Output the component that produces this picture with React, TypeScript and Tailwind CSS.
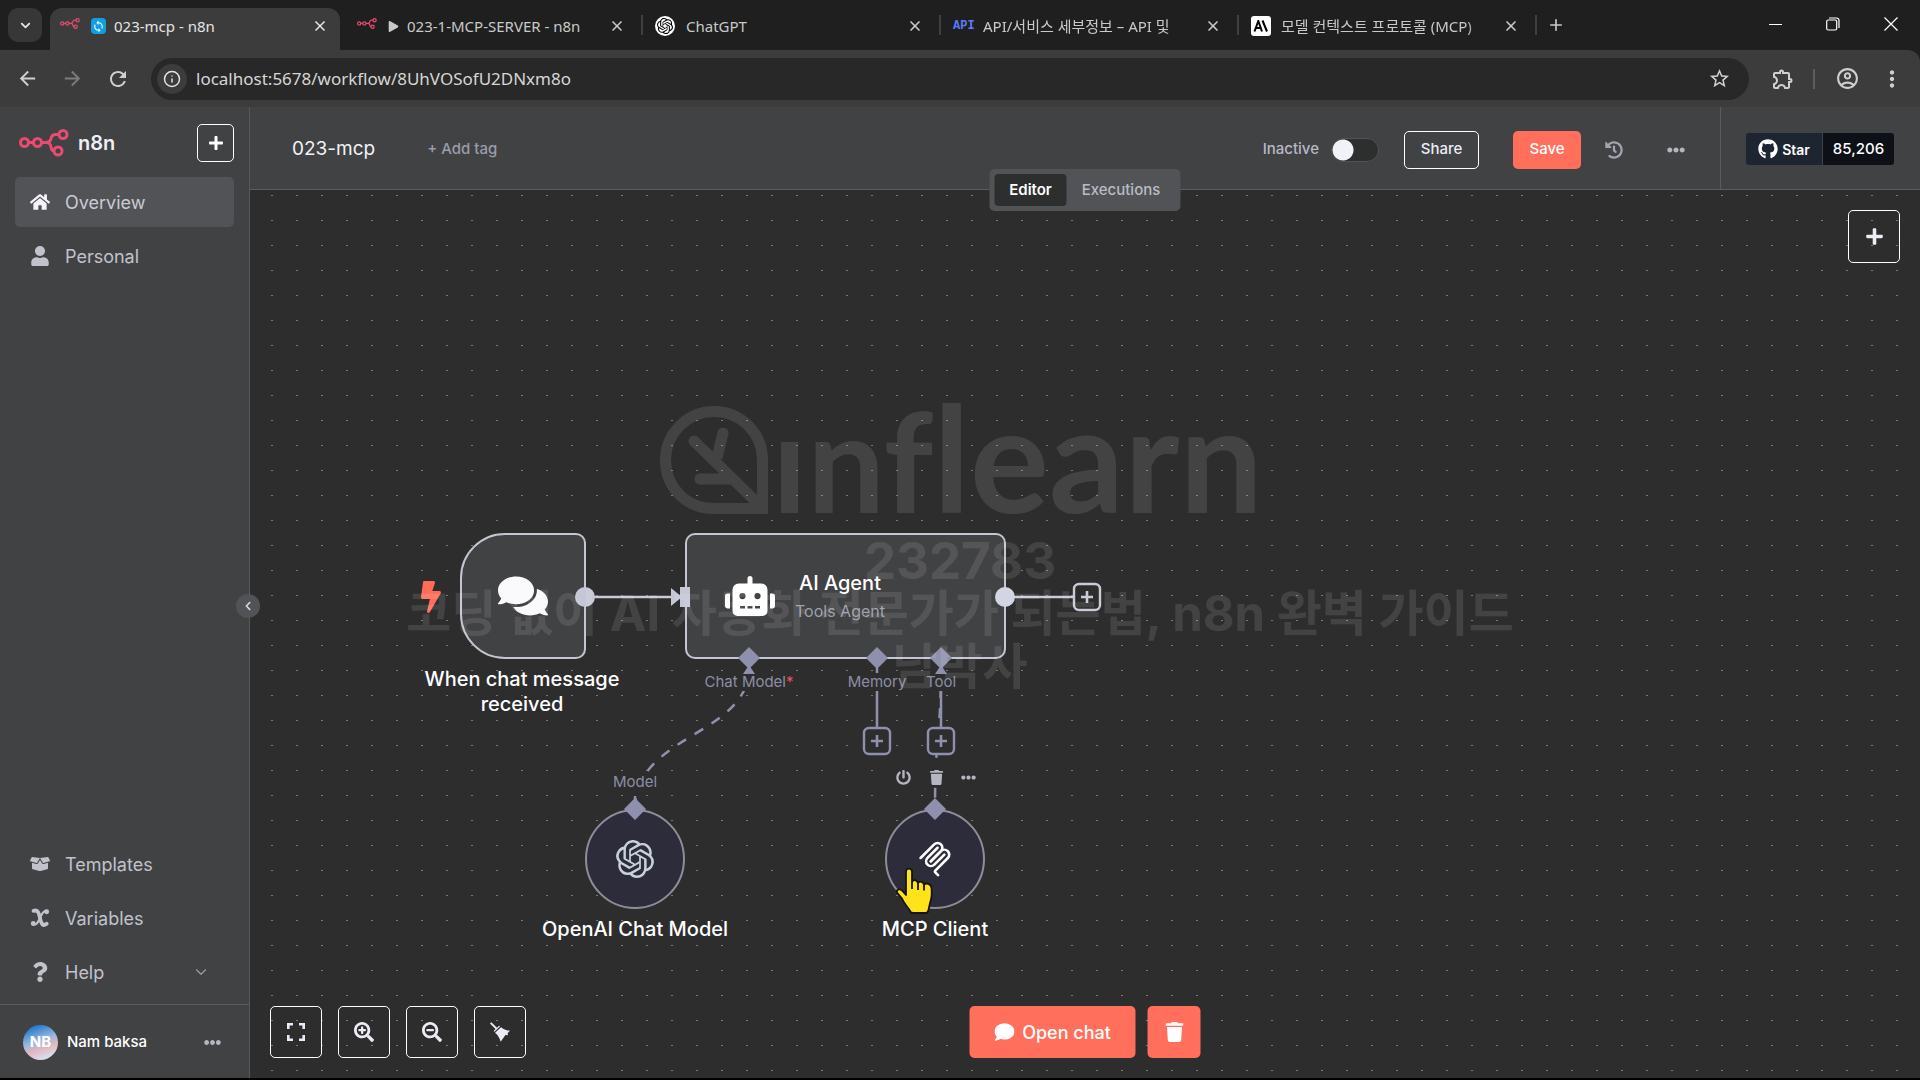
import React from "react";
import {
  FaBolt,
  FaBoxOpen,
  FaChevronLeft,
  FaComment,
  FaComments,
  FaEllipsisH,
  FaGithub,
  FaHistory,
  FaHome,
  FaPlay,
  FaPlus,
  FaPowerOff,
  FaQuestion,
  FaRobot,
  FaSearchMinus,
  FaSearchPlus,
  FaTrash,
  FaUser,
} from "react-icons/fa";
import {
  MdArrowBack,
  MdArrowForward,
  MdMoreVert,
  MdOutlineAccountCircle,
  MdOutlineExtension,
  MdRefresh,
  MdStarBorder,
  MdSync,
} from "react-icons/md";
import { SiOpenai } from "react-icons/si";
import { ChevronDown, Info, Plus, X } from "lucide-react";

function N8nMark({ className }: { className: string }) {
  return (
    <svg viewBox="0 0 50 28" className={className} fill="none" stroke="#ea4b71" strokeWidth="3" aria-hidden="true">
      <circle cx="5.5" cy="13.5" r="4" />
      <circle cx="18.5" cy="13.5" r="4" />
      <circle cx="44" cy="5.5" r="4" />
      <circle cx="39" cy="22" r="4" />
      <path d="M9.5 13.5h5M22.5 13.5h5c3 0 4-1.700 4.500-4s1.500-4 4.500-4h3.500M27.500 13.500c3 0 4 1.700 4.500 4.500s1.200 4 3 4" />
    </svg>
  );
}

function VariableIcon() {
  return (
    <svg viewBox="0 0 18 18" className="size-5" fill="none" stroke="currentColor" strokeLinecap="round" aria-hidden="true">
      <path d="M3.200 2.600C7 1.200 8 4 9 9s2.400 8 6 5.200" strokeWidth="3.400" />
      <path d="M15.200 2.800C12.500 1.800 10.500 5.500 9 9s-3.500 7.200-6.500 5.600" strokeWidth="2" />
      <circle cx="15" cy="3.400" r="1.200" strokeWidth="2" />
      <circle cx="2.900" cy="14" r="1.200" strokeWidth="2" />
    </svg>
  );
}

function FitIcon() {
  return (
    <svg viewBox="0 0 18 18" className="size-[18px]" fill="none" stroke="currentColor" strokeWidth="2.600" aria-hidden="true">
      <path d="M1.300 6V1.300H6M12 1.300h4.700V6M16.700 12v4.700H12M6 16.700H1.300V12" />
    </svg>
  );
}

function TidyIcon() {
  return (
    <svg viewBox="0 0 20 20" className="size-5" fill="currentColor" aria-hidden="true">
      <path d="M1.300.2 7 5.700l1.400-1.400a1.200 1.200 0 0 1 1.700 0L4.300 10a1.200 1.200 0 0 1 0-1.700l1.200-1.200L0 1.600z" />
      <path d="M11 5.200c3 2.500 5.500 3.300 9 3.300l-2.400 2.800.4 2-2.600-.2-4.700 6.700C9.500 16 8 13 5 10.800z" />
    </svg>
  );
}

function McpIcon({ className }: { className: string }) {
  return (
    <svg viewBox="0 0 180 180" className={className} fill="none" stroke="white" strokeWidth="13" strokeLinecap="round" aria-hidden="true">
      <path d="M18 84.853 85.882 16.971c9.373-9.373 24.569-9.373 33.941 0 9.373 9.372 9.373 24.568 0 33.941L68.558 102.177" />
      <path d="M69.265 101.470 119.823 50.912c9.373-9.373 24.569-9.373 33.942 0l.353.353c9.373 9.373 9.373 24.569 0 33.941L92.725 146.600c-3.124 3.124-3.124 8.189 0 11.313l12.606 12.607" />
      <path d="M102.853 33.941 52.648 84.146c-9.372 9.372-9.372 24.568 0 33.941 9.373 9.372 24.569 9.372 33.941 0l50.205-50.205" />
    </svg>
  );
}

function HandCursor() {
  return (
    <svg viewBox="0 0 40 50" className="absolute left-[645px] top-[677px] h-[50px] w-10" stroke="#16140a" strokeWidth="1.800" strokeLinejoin="round" aria-hidden="true">
      <path
        fill="#ffe31a"
        d="M11 5c0-4.500 6-4.500 6 0v10c1.500-3 5.500-2 6 1 1.500-2.300 5.500-1.500 6 1.500 2-2 7-.8 7.500 3.500.6 6 .5 10-1.500 15l-1.500 7c-.3 2-1 3-3 3H18c-2 0-3-1-3.500-3C12 39 8.500 36 7 31.500L2 25.500c-1-2.500 2-4 4.500-2.500L11 28z"
      />
      <path fill="none" d="M17 15v7M23 16v7M29 17.500v6" />
    </svg>
  );
}

type Tab = { title: string; icon: React.ReactNode; prefix?: React.ReactNode; active?: boolean; fade?: boolean };

const tabs: Tab[] = [
  {
    title: "023-mcp - n8n",
    active: true,
    icon: <N8nMark className="mb-1 w-5 shrink-0" />,
    prefix: (
      <span className="flex h-4 w-[15px] shrink-0 items-center justify-center rounded-sm bg-[#0f9fe2] text-white">
        <MdSync size={13} />
      </span>
    ),
  },
  { title: "023-1-MCP-SERVER - n8n", icon: <N8nMark className="mb-1 w-5 shrink-0" />, prefix: <FaPlay size={11} className="shrink-0" /> },
  {
    title: "ChatGPT",
    icon: (
      <span className="flex size-5 shrink-0 items-center justify-center rounded-full bg-white text-black">
        <SiOpenai size={16} />
      </span>
    ),
  },
  {
    title: "API/서비스 세부정보 – API 및",
    fade: true,
    icon: <span className="w-5 shrink-0 text-center font-['Liberation_Mono'] text-[12px] leading-none font-bold text-[#5b7cfa]">API</span>,
  },
  {
    title: "모델 컨텍스트 프로토콜 (MCP)",
    fade: true,
    icon: (
      <span className="flex size-5 shrink-0 items-center justify-center rounded-[3px] bg-white text-black">
        <svg viewBox="0 0 16 12" className="w-4" fill="none" stroke="currentColor" strokeWidth="2" aria-hidden="true">
          <path d="M1.500 11.500 5.300 1 9 11.500M3 8h5M9.500.5l4.500 11" />
        </svg>
      </span>
    ),
  },
];

function TabStrip() {
  return (
    <div className="flex h-[50px] items-start bg-[#1f1f1f] pt-2 text-[#c9c9c9]">
      <button aria-label="Search tabs" className="mx-2 flex size-[34px] shrink-0 items-center justify-center rounded-[10px] bg-[#373737] text-[#e3e3e3]">
        <ChevronDown size={15} strokeWidth={3} />
      </button>
      {tabs.map((tab, i) => (
        <React.Fragment key={tab.title}>
          <div
            className={
              tab.active
                ? "flex h-[42px] w-[290px] min-w-0 items-center rounded-t-[12px] bg-[#3c3c3c] pr-3 pb-1.5 pl-2.5 text-[#e4e4e4]"
                : "flex h-[42px] w-[290px] min-w-0 items-center pr-[13px] pb-1.5 pl-[9px]"
            }
          >
            {tab.icon}
            <span
              className={
                tab.fade
                  ? "ml-[10px] flex-1 text-[15px] whitespace-nowrap [mask-image:linear-gradient(to_right,black_88%,transparent)]"
                  : "ml-[11px] flex flex-1 items-center gap-2 text-[15px] whitespace-nowrap"
              }
            >
              {tab.prefix}
              {tab.title}
            </span>
            <button aria-label={`Close ${tab.title}`} className="ml-3 shrink-0">
              <X size={16} strokeWidth={2.500} />
            </button>
          </div>
          <span className={i === 0 ? "w-2 shrink-0" : "mx-[3px] mt-[7px] h-5 w-0.5 shrink-0 bg-[#3f3f3f]"} />
        </React.Fragment>
      ))}
      <button aria-label="New tab" className="mt-2 ml-[7px]">
        <Plus size={18} strokeWidth={2.200} />
      </button>
      <div className="mt-2 mr-[22px] ml-auto flex items-center gap-11 text-white">
        <button aria-label="Minimize" className="flex h-4 items-center">
          <span className="h-px w-[13px] bg-white" />
        </button>
        <button aria-label="Restore">
          <svg viewBox="0 0 14 14" className="size-3.5" fill="none" stroke="currentColor" strokeWidth="1.200" aria-hidden="true">
            <rect x="0.700" y="3" width="10" height="10" rx="1.500" />
            <path d="M3 1h7.500a2.500 2.500 0 0 1 2.500 2.500V11" />
          </svg>
        </button>
        <button aria-label="Close window">
          <svg viewBox="0 0 14 14" className="size-3.5" stroke="currentColor" strokeWidth="1.200" aria-hidden="true">
            <path d="m.5.5 13 13M13.500.5l-13 13" />
          </svg>
        </button>
      </div>
    </div>
  );
}

function AddressBar() {
  return (
    <div className="flex h-[57px] items-center rounded-tr-xl bg-[#3c3c3c] pr-[15px] pl-4 text-[#cfcfcf]">
      <button aria-label="Back" className="mr-[22px]"><MdArrowBack size={23} /></button>
      <button aria-label="Forward" className="mr-[22px] text-[#7c7c7c]"><MdArrowForward size={23} /></button>
      <button aria-label="Reload" className="mr-[21px]"><MdRefresh size={24} /></button>
      <div className="flex h-[42px] flex-1 items-center rounded-full bg-[#282828] pr-[18px] pl-1.5">
        <button aria-label="Site information" className="flex size-[30px] items-center justify-center rounded-full bg-[#3c3c3c] text-[#e3e3e3]">
          <Info size={18} />
        </button>
        <input
          aria-label="Address"
          defaultValue="localhost:5678/workflow/8UhVOSofU2DNxm8o"
          className="ml-[9px] min-w-0 flex-1 bg-transparent text-[17px] text-[#d6d6d6] outline-none"
        />
        <button aria-label="Bookmark this page"><MdStarBorder size={23} /></button>
      </div>
      <button aria-label="Extensions" className="ml-[22px]"><MdOutlineExtension size={24} /></button>
      <span className="mr-5 ml-[18px] h-5 w-0.5 bg-[#5c5c5c]" />
      <button aria-label="Profile"><MdOutlineAccountCircle size={25} /></button>
      <button aria-label="Browser menu" className="ml-[19px]"><MdMoreVert size={26} /></button>
    </div>
  );
}

function NavItem({ icon, label, active, trailing }: { icon: React.ReactNode; label: string; active?: boolean; trailing?: React.ReactNode }) {
  return (
    <a
      href="#"
      className={
        active
          ? "flex h-[50px] items-center rounded-[5px] bg-[#525356] pr-6 pl-[15px] text-[18px] text-[#c9cbd4]"
          : "flex h-[50px] items-center rounded-[5px] pr-6 pl-[15px] text-[18px] text-[#c0c2cc]"
      }
    >
      <span className="mr-[15px] flex w-5 justify-center">{icon}</span>
      {label}
      {trailing && <span className="ml-auto text-[#9fa1aa]">{trailing}</span>}
    </a>
  );
}

function Sidebar() {
  return (
    <aside className="relative z-20 flex w-[250px] shrink-0 flex-col border-r border-[#57585b] bg-[#414244]">
      <div className="flex items-center px-[15px] pt-[17px] pl-[19px]">
        <N8nMark className="w-[50px]" />
        <span className="ml-[9px] text-[20px] font-semibold text-[#eeeff5]">n8n</span>
        <button aria-label="Create" className="ml-auto flex h-[38px] w-[37px] items-center justify-center rounded-[5px] border border-white text-white">
          <FaPlus size={16} />
        </button>
      </div>
      <nav className="mt-[15px] flex flex-1 flex-col gap-1 px-[15px]">
        <NavItem active icon={<FaHome size={20} className="text-[#f4f4fa]" />} label="Overview" />
        <NavItem icon={<FaUser size={20} />} label="Personal" />
        <div className="mt-auto flex flex-col gap-1 pb-[7px]">
          <NavItem icon={<FaBoxOpen size={20} />} label="Templates" />
          <NavItem icon={<VariableIcon />} label="Variables" />
          <NavItem icon={<FaQuestion size={20} />} label="Help" trailing={<ChevronDown size={18} strokeWidth={1.500} />} />
        </div>
      </nav>
      <div className="flex h-[74px] items-center border-t border-[#5b5c5f] pt-0.5 pr-7 pl-[23px]">
        <span className="flex size-[35px] items-center justify-center rounded-full bg-[linear-gradient(160deg,#2f7fd0_15%,#9db8dc_45%,#e3b9c0_65%,#d9dceb_85%)] text-[15px] font-bold text-white">
          NB
        </span>
        <span className="ml-[9px] text-[15px] font-medium text-white">Nam baksa</span>
        <button aria-label="User menu" className="ml-auto text-[#b4b6c0]"><FaEllipsisH size={17} /></button>
      </div>
      <button aria-label="Collapse sidebar" className="absolute top-[487px] -right-[11px] flex size-6 items-center justify-center rounded-full bg-[#525356] text-[#d5d6dd]">
        <FaChevronLeft size={10} />
      </button>
    </aside>
  );
}

function WorkflowHeader() {
  return (
    <header className="relative z-10 flex h-[83px] items-center border-b border-[#5b5c5f] bg-[#414244]">
      <div className="flex flex-1 items-center pt-[3px]">
        <h1 className="ml-[42px] text-[19px] text-[#f2f2f7]">023-mcp</h1>
        <button className="ml-[52px] text-[15px] font-medium text-[#9a9ca8]">+ Add tag</button>
        <label htmlFor="active" className="ml-auto text-[15px] font-medium text-[#b6b8c6]">Inactive</label>
        <input
          id="active"
          type="checkbox"
          role="switch"
          className="ml-3 h-6 w-12 appearance-none rounded-full border border-[#525356] bg-[#2d2e2e] bg-[radial-gradient(circle_at_11px_50%,#f1f1f8_10px,transparent_11px)]"
        />
        <button className="ml-[25px] h-[38px] w-[75px] rounded-[5px] border border-white text-[15px] font-medium text-[#ececf6]">Share</button>
        <button className="ml-[34px] h-[38px] w-[68px] rounded-[5px] bg-[#ff6f5c] text-[15px] font-medium text-white">Save</button>
        <button aria-label="Workflow history" className="ml-6 text-[#a2a4ae]"><FaHistory size={18} /></button>
        <button aria-label="Workflow menu" className="mr-[35px] ml-11 text-[#b4b6c0]"><FaEllipsisH size={18} /></button>
      </div>
      <div className="flex h-full items-center border-l border-[#5b5c5f] pt-0.5 pr-[26px] pl-[25px]">
        <a href="#" className="flex h-8 w-[77px] items-center justify-center gap-1 rounded-l-[3px] border-r border-[#3c434c] bg-[#1d2530] text-[14px] font-semibold text-white">
          <FaGithub size={20} />
          Star
        </a>
        <a href="#" className="flex h-8 w-[71px] items-center justify-center rounded-r-[3px] bg-[#0d1117] text-[15px] font-medium text-white">
          85,206
        </a>
      </div>
      <div className="absolute top-[62px] left-1/2 flex h-[42px] w-[191px] -translate-x-1/2 items-center rounded-[5px] bg-[#525356] p-[5px] text-[15px] font-medium">
        <button className="h-8 w-[72px] rounded-[4px] bg-[#2d2e2e] font-semibold text-white">Editor</button>
        <button className="flex-1 text-[#b9bbc6]">Executions</button>
      </div>
    </header>
  );
}

function Diamond({ x, y }: { x: number; y: number }) {
  return <path d={`M${x} ${y - 11}l11 11-11 11-11-11z`} fill="#8f90ad" />;
}

function PlusBox({ x, y, color }: { x: number; y: number; color: string }) {
  return (
    <g fill="#2d2d2d" stroke={color} strokeWidth="2.400">
      <rect x={x - 13} y={y - 13} width="26" height="26" rx="5" />
      <path d={`M${x - 6} ${y}h12M${x} ${y - 6}v12`} strokeWidth="2.600" />
    </g>
  );
}

function Edges() {
  return (
    <svg className="absolute top-0 left-0 h-[700px] w-[900px]" fill="none" aria-hidden="true">
      <g stroke="#8f90ad" strokeWidth="2.500">
        <path d="M499 478C499 545 385 545 385 618" strokeDasharray="10 10" />
        <path d="M691 478C691 545 685 545 685 618" strokeDasharray="10 10" />
        <path d="M627 478v60M691 478v60M385 606v12" />
      </g>
      <path d="M335 407h90M755 407h68" stroke="#c9cbd8" strokeWidth="2.500" />
    </svg>
  );
}

function Handles() {
  return (
    <svg className="absolute top-0 left-0 h-[700px] w-[900px]" fill="none" aria-hidden="true">
      <circle cx="335" cy="407" r="10" fill="#c5c7d6" />
      <circle cx="755" cy="407" r="10" fill="#d3d5e2" />
      <path d="M421 398l11 9-11 9zM430 397h10v20h-10z" fill="#c5c7d6" />
      <path d="M499 475l6 9h-12zM691 475l6 9h-12z" fill="#8f90ad" />
      <Diamond x={499} y={468} />
      <Diamond x={627} y={468} />
      <Diamond x={691} y={468} />
      <Diamond x={385} y={619} />
      <Diamond x={685} y={619} />
      <PlusBox x={837} y={407} color="#c9cbd8" />
      <PlusBox x={627} y={551} color="#8f90ad" />
      <PlusBox x={691} y={551} color="#8f90ad" />
    </svg>
  );
}

function EdgeLabel({ className, children }: { className: string; children: React.ReactNode }) {
  return (
    <span className={`absolute -translate-x-1/2 bg-[#2d2d2d] text-[15px] leading-[18px] whitespace-nowrap text-[#8c8da6] ${className}`}>
      {children}
    </span>
  );
}

function NodeTitle({ className, children }: { className: string; children: React.ReactNode }) {
  return <div className={`absolute -translate-x-1/2 text-center text-[20px] leading-[25px] font-medium text-white ${className}`}>{children}</div>;
}

function Watermark() {
  return (
    <div className="pointer-events-none absolute top-[216px] left-[161px] flex w-[1098px] flex-col items-center font-['Inter','Noto_Sans_CJK_KR',sans-serif] whitespace-nowrap text-white opacity-10">
      <div className="flex h-[108px] w-[600px] items-end font-['Lato',sans-serif] leading-[108px] font-bold">
        <svg viewBox="0 0 108 108" className="size-[108px] shrink-0" fill="none" stroke="currentColor" strokeWidth="11" aria-hidden="true">
          <path d="M102 102.500H54C25 102.500 5.500 80 5.500 54S27 5.500 54 5.500 102.500 27 102.500 54V102L34 35M57 52l6-25M72 73H40" />
          <path d="M34 35v.01M63 27v.01M40 73v.01" strokeLinecap="round" />
        </svg>
        <div className="ml-1 flex items-baseline">
          <span className="text-[138px]">ınf</span>
          <span className="text-[148px]">learn</span>
        </div>
      </div>
      <p className="mt-5 text-[51px] leading-[53px] font-bold">232783</p>
      <p className="text-[49px] leading-[53px] font-bold">코딩 없이 AI 자동화 전문가가 되는법, n8n 완벽 가이드</p>
      <p className="text-[49px] leading-[53px] font-bold">남박사</p>
    </div>
  );
}

function Canvas() {
  return (
    <main className="relative flex-1 overflow-hidden bg-[#2d2d2d]">
      <div className="absolute inset-0 bg-[linear-gradient(#77787a,#77787a),linear-gradient(#4a4b4c,#4a4b4c)] bg-[size:25px_25px] [mask-image:linear-gradient(to_right,black_2px,transparent_2px),linear-gradient(black_1px,transparent_1px)] [mask-composite:intersect] [mask-position:21px_5px] [mask-size:25px_25px]" />
      <Edges />

      <FaBolt className="absolute top-[391px] left-[169px] h-8 w-6 text-[#ff6d5a]" />
      <div className="absolute top-[343px] left-[210px] flex size-[126px] items-center justify-center rounded-l-[45px] rounded-r-[10px] border-2 border-[#c3c5d0] bg-[#414244]">
        <FaComments size={50} className="text-[#fafafc]" />
      </div>
      <NodeTitle className="top-[477px] left-[272px] w-[220px]">When chat message received</NodeTitle>

      <div className="absolute top-[343px] left-[435px] flex h-[126px] w-[321px] items-center rounded-[10px] border-2 border-[#c3c5d0] bg-[#414244] pl-[38px]">
        <FaRobot size={50} className="text-white" />
        <div className="ml-5 flex flex-col items-center">
          <span className="text-[20px] leading-[30px] font-medium text-white">AI Agent</span>
          <span className="text-[16px] leading-[26px] text-[#9d9fa9]">Tools Agent</span>
        </div>
      </div>

      <EdgeLabel className="top-[483px] left-[499px]">Chat Model<span className="text-[#f04f5f]">*</span></EdgeLabel>
      <EdgeLabel className="top-[483px] left-[627px]">Memory</EdgeLabel>
      <EdgeLabel className="top-[483px] left-[691px]">Tool</EdgeLabel>
      <EdgeLabel className="top-[583px] left-[385px]">Model</EdgeLabel>

      <div className="absolute top-[619px] left-[335px] flex size-[100px] items-center justify-center rounded-full border-2 border-[#8e8d98] bg-[#2d2c3b]">
        <SiOpenai size={38} className="text-[#c8d0dc]" />
      </div>
      <NodeTitle className="top-[727px] left-[385px] whitespace-nowrap">OpenAI Chat Model</NodeTitle>

      <div className="absolute top-[577px] left-[646px] flex h-5 w-[80px] items-center justify-between bg-[#2d2d2d] text-[#b5b6bf]">
        <button aria-label="Deactivate node"><FaPowerOff size={15} /></button>
        <button aria-label="Delete node"><FaTrash size={15} /></button>
        <button aria-label="Node menu"><FaEllipsisH size={15} /></button>
      </div>
      <div className="absolute top-[619px] left-[635px] flex size-[100px] items-center justify-center rounded-full border-2 border-[#8e8d98] bg-[#2d2c3b]">
        <McpIcon className="size-9" />
      </div>
      <NodeTitle className="top-[727px] left-[685px] whitespace-nowrap">MCP Client</NodeTitle>

      <Handles />
      <HandCursor />

      <button aria-label="Add node" className="absolute top-5 right-5 flex h-[53px] w-[52px] items-center justify-center rounded-[5px] border border-white text-[#ececf4]">
        <FaPlus size={19} />
      </button>

      <div className="absolute bottom-5 left-5 flex gap-4 text-[#ececf4]">
        <button aria-label="Zoom to fit" className="flex size-[52px] items-center justify-center rounded-[5px] border border-white"><FitIcon /></button>
        <button aria-label="Zoom in" className="flex size-[52px] items-center justify-center rounded-[5px] border border-white"><FaSearchPlus size={20} /></button>
        <button aria-label="Zoom out" className="flex size-[52px] items-center justify-center rounded-[5px] border border-white"><FaSearchMinus size={20} /></button>
        <button aria-label="Tidy up" className="flex size-[52px] items-center justify-center rounded-[5px] border border-white"><TidyIcon /></button>
      </div>

      <div className="absolute bottom-5 left-1/2 flex -translate-x-1/2 gap-3">
        <button className="flex h-[52px] w-[166px] items-center justify-center gap-2 rounded-[5px] bg-[#ff6f5c] text-[18px] font-medium text-white">
          <FaComment size={20} />
          Open chat
        </button>
        <button aria-label="Delete chat" className="flex h-[52px] w-[53px] items-center justify-center rounded-[5px] bg-[#ff6f5c] text-white">
          <FaTrash size={20} />
        </button>
      </div>

      <Watermark />
    </main>
  );
}

export default function App() {
  return (
    <div className="flex min-h-screen flex-col border-b-2 border-black bg-[#1f1f1f] font-['Noto_Sans','Noto_Sans_CJK_KR',sans-serif]">
      <TabStrip />
      <AddressBar />
      <div className="flex flex-1 font-['Inter','Noto_Sans_CJK_KR',sans-serif]">
        <Sidebar />
        <div className="flex min-w-0 flex-1 flex-col">
          <WorkflowHeader />
          <Canvas />
        </div>
      </div>
    </div>
  );
}
